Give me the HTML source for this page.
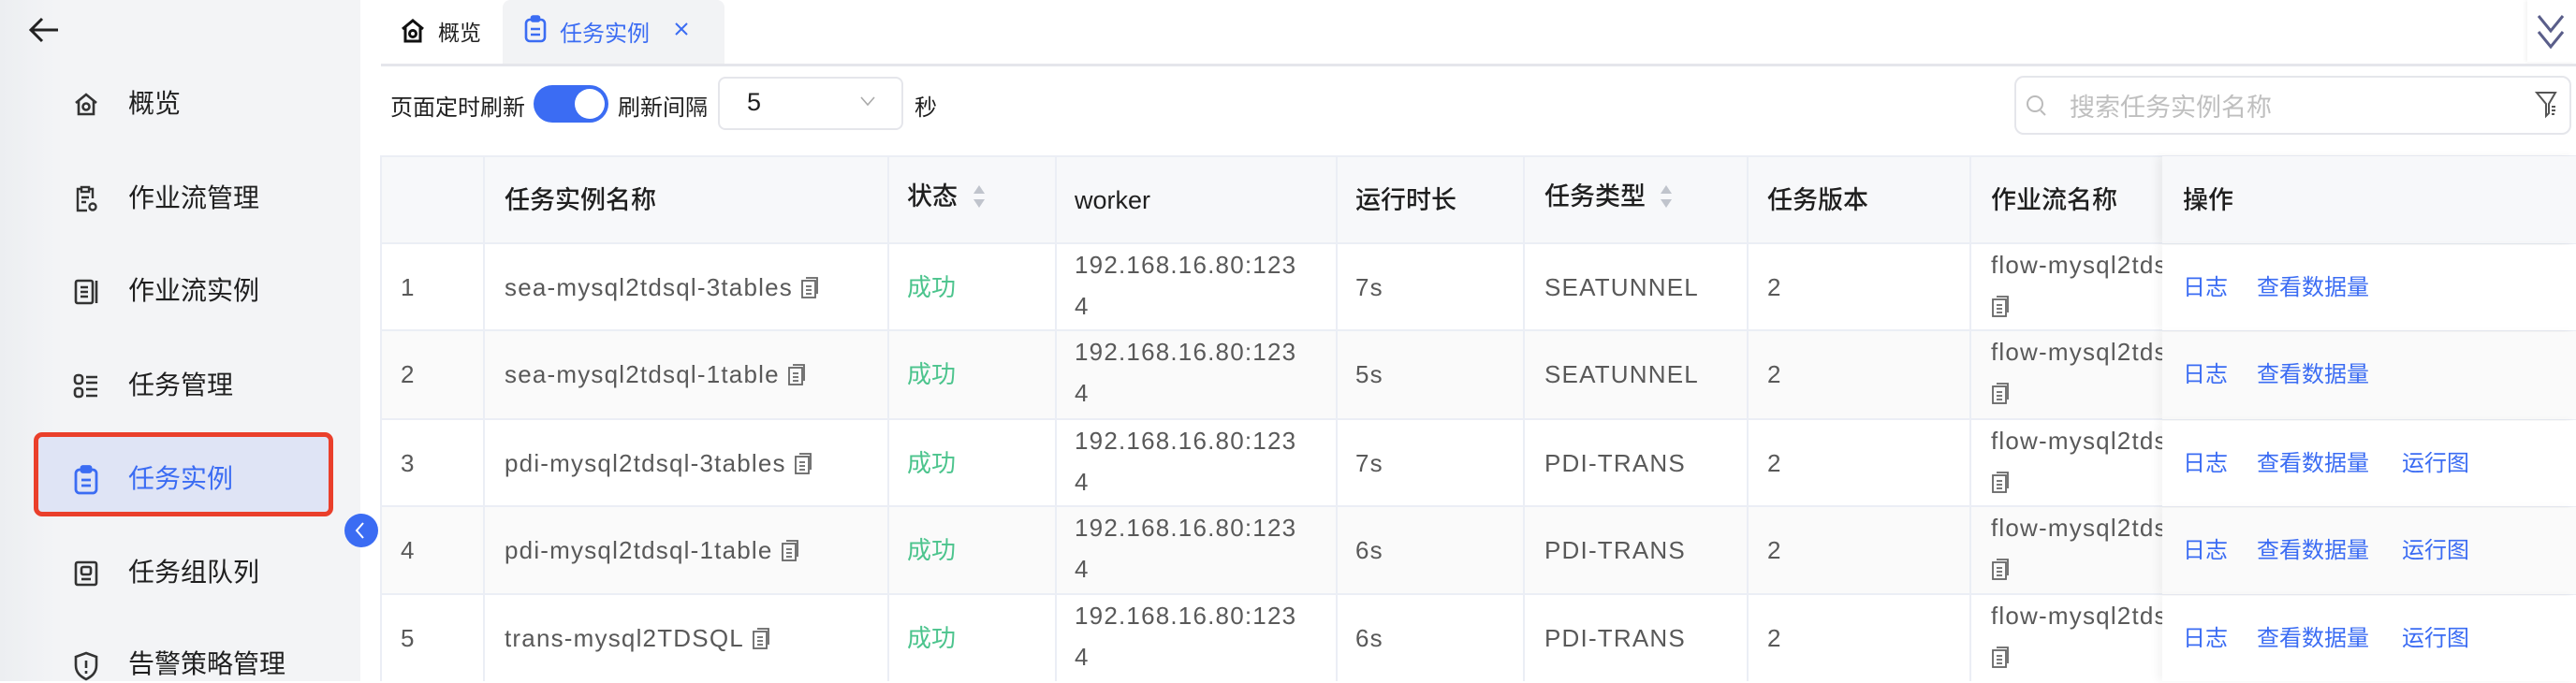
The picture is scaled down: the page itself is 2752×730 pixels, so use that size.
<!DOCTYPE html>
<html><head><meta charset="utf-8"><style>
*{margin:0;padding:0;box-sizing:border-box}
body{width:2752px;height:728px;overflow:hidden;background:#fff;font-family:"Liberation Sans","Noto Sans CJK SC",sans-serif;position:relative;color:#333}
.a{position:absolute;white-space:nowrap}
#side{left:0;top:0;width:385px;height:728px;background:linear-gradient(90deg,#eceef1 0,#f3f4f6 60px,#f3f4f6)}
.mi{position:absolute;left:137px;font-size:28px;color:#1f1f1f;line-height:40px}
.ic{position:absolute;left:78px}
.cell{position:absolute;font-size:26px;color:#595959;line-height:44px;white-space:nowrap;overflow:hidden}
.lat{letter-spacing:1.2px}
.hd{position:absolute;font-size:27px;color:#1f1f1f;font-weight:500;line-height:40px}
.vl{position:absolute;width:2px;background:#ebeef5}
.hl{position:absolute;height:2px;background:#ebeef5;left:407px;width:2345px}
.lk{color:#3b6cf3;font-size:24px}
.ok{color:#4cc48d}
</style></head><body>
<div id="side" class="a"></div>
<svg class="a" style="left:30px;top:18px" width="34" height="28" viewBox="0 0 34 28"><path d="M32 14H3M15 2L3 14l12 12" fill="none" stroke="#222" stroke-width="3"/></svg>

<svg class="ic" style="top:97px" width="28" height="28" viewBox="0 0 28 28" fill="none" stroke="#333" stroke-width="2.6"><path d="M3 13L14 4l11 9M6 11v14h16V11"/><circle cx="14" cy="17" r="3.5"/></svg>
<div class="mi" style="top:91px">概览</div>
<svg class="ic" style="top:198px" width="28" height="30" viewBox="0 0 28 30" fill="none" stroke="#333" stroke-width="2.4"><path d="M8 4H5v23h10M18 4h3v10"/><rect x="9" y="2" width="8" height="5"/><path d="M9 13h8M9 18h5"/><circle cx="21" cy="23" r="3.5"/></svg>
<div class="mi" style="top:192px">作业流管理</div>
<svg class="ic" style="top:297px" width="28" height="30" viewBox="0 0 28 30" fill="none" stroke="#333" stroke-width="2.6"><rect x="3" y="3" width="18" height="24" rx="2"/><path d="M8 10h8M8 15h8M8 20h8M25 3v24"/></svg>
<div class="mi" style="top:291px">作业流实例</div>
<svg class="ic" style="top:398px" width="28" height="30" viewBox="0 0 28 30" fill="none" stroke="#333" stroke-width="2.6"><rect x="2" y="3" width="8" height="9" rx="3"/><rect x="2" y="17" width="8" height="9" rx="3"/><path d="M14 5h12M14 11h12M14 18h12M14 25h12"/></svg>
<div class="mi" style="top:392px">任务管理</div>

<div class="a" style="left:36px;top:462px;width:320px;height:90px;border:5px solid #ea3f2b;border-radius:9px;background:#dfe4f5"></div>
<svg class="ic" style="top:497px" width="28" height="32" viewBox="0 0 28 32" fill="none" stroke="#3b6cf3" stroke-width="2.8"><rect x="3" y="5" width="22" height="25" rx="4"/><rect x="9" y="1.5" width="10" height="6" rx="1.5" fill="#3b6cf3"/><path d="M9 16h10M9 22h10"/></svg>
<div class="mi" style="top:492px;color:#3b6cf3">任务实例</div>
<div class="a" style="left:368px;top:549px;width:36px;height:36px;border-radius:50%;background:#3b6cf3"></div>
<svg class="a" style="left:378px;top:557px" width="14" height="20" viewBox="0 0 14 20"><path d="M10 2L3 10l7 8" fill="none" stroke="#fff" stroke-width="2"/></svg>

<svg class="ic" style="top:598px" width="28" height="30" viewBox="0 0 28 30" fill="none" stroke="#333" stroke-width="2.6"><rect x="3" y="3" width="22" height="24" rx="2"/><rect x="9" y="8" width="10" height="8" rx="2"/><path d="M9 21h10"/></svg>
<div class="mi" style="top:592px">任务组队列</div>
<svg class="ic" style="top:696px" width="28" height="32" viewBox="0 0 28 32" fill="none" stroke="#333" stroke-width="2.6"><path d="M14 2l11 4v9c0 8-5 12-11 15C8 27 3 23 3 15V6z"/><path d="M14 10v8M14 21v3"/></svg>
<div class="mi" style="top:690px">告警策略管理</div>

<!-- tabs -->
<div class="a" style="left:537px;top:0;width:237px;height:70px;background:#f2f3f5;border-radius:8px 8px 0 0"></div>
<div class="a" style="left:407px;top:68px;width:2345px;height:3px;background:#e5e6eb"></div>
<svg class="a" style="left:428px;top:19px" width="26" height="28" viewBox="0 0 26 28" fill="none" stroke="#111" stroke-width="3"><path d="M2 12L13 3l11 9M5 10v15h16V10"/><circle cx="13" cy="17" r="3.5"/></svg>
<div class="a" style="left:468px;top:16px;font-size:23px;color:#1f1f1f">概览</div>
<svg class="a" style="left:560px;top:16px" width="24" height="30" viewBox="0 0 24 30" fill="none" stroke="#3b6cf3" stroke-width="2.6"><rect x="2" y="5" width="20" height="23" rx="4"/><rect x="8" y="1.5" width="8" height="5" rx="1.5" fill="#3b6cf3"/><path d="M7 15h10M7 21h10"/></svg>
<div class="a" style="left:598px;top:16px;font-size:24px;color:#3b6cf3">任务实例</div>
<svg class="a" style="left:720px;top:23px" width="16" height="16" viewBox="0 0 16 16"><path d="M2 2l12 12M14 2L2 14" stroke="#3b6cf3" stroke-width="2"/></svg>
<div class="a" style="left:2700px;top:0;width:52px;height:66px;background:#fff;box-shadow:-2px 0 4px rgba(0,0,0,.05)"></div>
<svg class="a" style="left:2709px;top:14px" width="32" height="40" viewBox="0 0 32 40" fill="none" stroke="#5a5e8a" stroke-width="3"><path d="M3 3l13 16 13-16M3 20l13 16 13-16"/></svg>

<!-- toolbar -->
<div class="a" style="left:417px;top:95px;font-size:24px;color:#1f1f1f">页面定时刷新</div>
<div class="a" style="left:570px;top:91px;width:80px;height:40px;border-radius:20px;background:#3b6cf3"></div>
<div class="a" style="left:614px;top:95px;width:32px;height:32px;border-radius:50%;background:#fff"></div>
<div class="a" style="left:660px;top:95px;font-size:24px;color:#1f1f1f">刷新间隔</div>
<div class="a" style="left:767px;top:82px;width:198px;height:57px;border:2px solid #e5e6eb;border-radius:8px"></div>
<div class="a" style="left:798px;top:94px;font-size:27px;color:#1f1f1f">5</div>
<svg class="a" style="left:918px;top:102px" width="18" height="12" viewBox="0 0 18 12"><path d="M2 2l7 8 7-8" fill="none" stroke="#aaa" stroke-width="1.6"/></svg>
<div class="a" style="left:977px;top:95px;font-size:24px;color:#1f1f1f">秒</div>
<div class="a" style="left:2152px;top:81px;width:595px;height:63px;border:2px solid #e5e6eb;border-radius:10px"></div>
<svg class="a" style="left:2164px;top:100px" width="24" height="26" viewBox="0 0 24 26" fill="none" stroke="#bbb" stroke-width="2"><circle cx="10" cy="11" r="8"/><path d="M16 18l5 5"/></svg>
<div class="a" style="left:2211px;top:93px;font-size:27px;color:#bfbfbf">搜索任务实例名称</div>
<svg class="a" style="left:2708px;top:96px" width="24" height="32" viewBox="0 0 24 32" fill="none" stroke="#555" stroke-width="2"><path d="M2 3h20l-7 12v10l-3 3V15z"/><path d="M18 18h4M18 22h4M18 26h3"/></svg>

<!-- table -->
<div class="a" style="left:407px;top:167px;width:2345px;height:93px;background:#f7f8fa"></div>
<div class="a" style="left:407px;top:353px;width:2345px;height:95px;background:#fafafa"></div>
<div class="a" style="left:407px;top:541px;width:2345px;height:94px;background:#fafafa"></div>

<div class="hl" style="top:166px"></div>
<div class="hl" style="top:259px"></div>
<div class="hl" style="top:352px"></div>
<div class="hl" style="top:447px"></div>
<div class="hl" style="top:540px"></div>
<div class="hl" style="top:634px"></div>
<div class="vl" style="left:406px;top:166px;height:562px"></div>
<div class="vl" style="left:516px;top:166px;height:562px"></div>
<div class="vl" style="left:948px;top:166px;height:562px"></div>
<div class="vl" style="left:1127px;top:166px;height:562px"></div>
<div class="vl" style="left:1427px;top:166px;height:562px"></div>
<div class="vl" style="left:1627px;top:166px;height:562px"></div>
<div class="vl" style="left:1866px;top:166px;height:562px"></div>
<div class="vl" style="left:2104px;top:166px;height:562px"></div>

<div class="hd" style="left:539px;top:194px">任务实例名称</div>
<div class="hd" style="left:969px;top:190px">状态</div>
<svg class="a" style="left:1038px;top:196px" width="16" height="28" viewBox="0 0 16 28"><path d="M8 2l6 9H2zM8 26l6-9H2z" fill="#c0c4cc"/></svg>
<div class="hd" style="left:1148px;top:194px">worker</div>
<div class="hd" style="left:1448px;top:194px">运行时长</div>
<div class="hd" style="left:1650px;top:190px">任务类型</div>
<svg class="a" style="left:1772px;top:196px" width="16" height="28" viewBox="0 0 16 28"><path d="M8 2l6 9H2zM8 26l6-9H2z" fill="#c0c4cc"/></svg>
<div class="hd" style="left:1888px;top:194px">任务版本</div>
<div class="hd" style="left:2127px;top:194px">作业流名称</div>

<div id="rows"></div>
<script>
var rows=[[260,93,"1","sea-mysql2tdsql-3tables","7s","SEATUNNEL",false],[353,95,"2","sea-mysql2tdsql-1table","5s","SEATUNNEL",false],[448,93,"3","pdi-mysql2tdsql-3tables","7s","PDI-TRANS",true],[541,94,"4","pdi-mysql2tdsql-1table","6s","PDI-TRANS",true],[635,93,"5","trans-mysql2TDSQL","6s","PDI-TRANS",true]];
var cp='<svg width="22" height="26" viewBox="0 0 22 26" style="vertical-align:-4px;margin-left:8px" fill="none" stroke="#666" stroke-width="1.8"><rect x="2" y="6" width="14" height="18"/><path d="M6 3h12v17M6 12h6M6 16h6M6 20h6"/></svg>';
var h='';
h+='<div class="a" style="left:2310px;top:167px;width:442px;height:93px;background:#f7f8fa;box-shadow:-6px 0 8px rgba(0,0,0,.05)"></div>';
h+='<div class="hd" style="left:2332px;top:194px">操作</div>';
rows.forEach(function(r,i){var t=r[0],c=t+25;
h+='<div class="cell" style="left:428px;top:'+c+'px">'+r[2]+'</div>';
h+='<div class="cell lat" style="left:539px;top:'+c+'px">'+r[3]+cp+'</div>';
h+='<div class="cell ok" style="left:969px;top:'+c+'px">成功</div>';
h+='<div class="cell lat" style="left:1148px;top:'+(t+1)+'px">192.168.16.80:123<br>4</div>';
h+='<div class="cell lat" style="left:1448px;top:'+c+'px">'+r[4]+'</div>';
h+='<div class="cell lat" style="left:1650px;top:'+c+'px">'+r[5]+'</div>';
h+='<div class="cell" style="left:1888px;top:'+c+'px">2</div>';
h+='<div class="cell lat" style="left:2127px;top:'+(t+1)+'px;width:183px">flow-mysql2tdsql<br>'+cp.replace('margin-left:8px','margin-left:0')+'</div>';
h+='<div class="a" style="left:2310px;top:'+(t+2)+'px;width:442px;height:'+(r[1]-2)+'px;background:'+(i%2?'#fafafa':'#fff')+';box-shadow:-6px 0 8px rgba(0,0,0,.04)"></div>';
h+='<div class="cell lk" style="left:2332px;top:'+(c+1)+'px">日志</div>';
h+='<div class="cell lk" style="left:2411px;top:'+(c+1)+'px">查看数据量</div>';
if(r[6])h+='<div class="cell lk" style="left:2566px;top:'+(c+1)+'px">运行图</div>';
});
document.getElementById('rows').innerHTML=h;
</script>
</body></html>
